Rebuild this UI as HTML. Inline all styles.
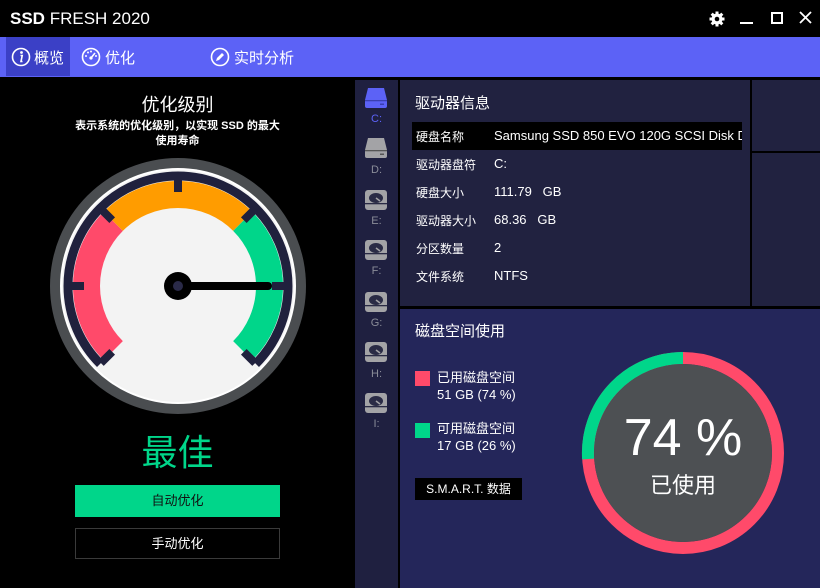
<!DOCTYPE html>
<html><head><meta charset="utf-8"><style>
*{margin:0;padding:0;box-sizing:border-box}
body{width:820px;height:588px;background:#000;position:relative;overflow:hidden;font-family:"Liberation Sans","Noto Sans CJK SC",sans-serif;color:#fff}
.a{position:absolute}
.t{white-space:nowrap}
.drv{position:absolute;left:355px;width:43px;text-align:center;font-size:11px;color:#8a8c98}
.row{position:absolute;left:416px;font-size:12px;white-space:nowrap}
.row span{position:absolute;left:78px;font-size:13px}
</style></head><body>
<!-- title bar -->
<div class="a t" style="left:10px;top:9px;font-size:17px;"><b>SSD</b> FRESH 2020</div>
<svg class="a" style="left:708px;top:10px" width="18" height="18" viewBox="0 0 18 18"><g fill="#fff"><circle cx="9" cy="9" r="5.5"/><rect x="7.5" y="1.5" width="3" height="15"/><rect x="1.5" y="7.5" width="15" height="3"/><rect x="7.5" y="1.5" width="3" height="15" transform="rotate(45 9 9)"/><rect x="7.5" y="1.5" width="3" height="15" transform="rotate(-45 9 9)"/></g><circle cx="9" cy="9" r="2.3" fill="#000"/></svg>
<div class="a" style="left:740px;top:22px;width:13px;height:2px;background:#fff"></div>
<div class="a" style="left:771px;top:12px;width:12px;height:12px;border:2px solid #fff"></div>
<svg class="a" style="left:799px;top:11px" width="13" height="13"><path d="M1 1L12 12M12 1L1 12" stroke="#fff" stroke-width="1.8"/></svg>
<!-- nav -->
<div class="a" style="left:0;top:37px;width:820px;height:40px;background:#5c62f6"></div>
<div class="a" style="left:6px;top:37px;width:64px;height:39px;background:#3b40c6"></div>
<svg class="a" style="left:11px;top:47px" width="20" height="20"><circle cx="10" cy="10" r="8.5" fill="none" stroke="#fff" stroke-width="1.6"/><circle cx="10.5" cy="5.5" r="1.4" fill="#fff"/><path d="M9.5 8.5h1.7l-1.2 6h1.5" stroke="#fff" stroke-width="1.6" fill="none"/></svg>
<div class="a t" style="left:34px;top:47px;font-size:15px">概览</div>
<svg class="a" style="left:81px;top:47px" width="20" height="20"><circle cx="10" cy="10" r="8.5" fill="none" stroke="#fff" stroke-width="1.6"/><path d="M10 11L14 6" stroke="#fff" stroke-width="1.6"/><circle cx="10" cy="11" r="1.6" fill="#fff"/><g fill="#fff"><circle cx="5" cy="9" r="1"/><circle cx="7" cy="5.5" r="1"/><circle cx="10" cy="4.5" r="1"/><circle cx="15" cy="9" r="1"/></g></svg>
<div class="a t" style="left:105px;top:47px;font-size:15px">优化</div>
<svg class="a" style="left:210px;top:47px" width="20" height="20"><circle cx="10" cy="10" r="8.5" fill="none" stroke="#fff" stroke-width="1.6"/><path d="M6 14l1-3 5-5 2 2-5 5z" fill="#fff"/></svg>
<div class="a t" style="left:234px;top:47px;font-size:15px">实时分析</div>
<!-- left panel -->
<div class="a t" style="left:0;width:355px;top:91px;text-align:center;font-size:18px">优化级别</div>
<div class="a" style="left:0;width:355px;top:119px;text-align:center;font-size:11px;font-weight:bold;line-height:15px">表示系统的优化级别，以实现 SSD 的最大<br>使用寿命</div>
<svg class="a" style="left:0;top:0" width="355" height="588">
<circle cx="178" cy="286" r="128" fill="#4a4d50"/>
<circle cx="178" cy="286" r="118" fill="#fff"/>
<circle cx="178" cy="286" r="116" fill="#f3f3f3"/>
<g fill="none" stroke-width="27">
<path d="M113.3 350.7A91.5 91.5 0 0 1 113.3 221.3" stroke="#ff4a6a"/>
<path d="M113.3 221.3A91.5 91.5 0 0 1 242.7 221.3" stroke="#ff9c00"/>
<path d="M242.7 221.3A91.5 91.5 0 0 1 242.7 350.7" stroke="#00d68a"/>
</g>
<path d="M100.2 363.8A110 110 0 1 1 255.8 363.8" fill="none" stroke="#20213d" stroke-width="9"/>
<g stroke="#20213d" stroke-width="8">
<path d="M178 176v16M68 286h16M288 286h-16M100.9 208.9l11.3 11.3M255.1 208.9l-11.3 11.3M100.9 363.1l11.3-11.3M255.1 363.1l-11.3-11.3"/>
</g>
<path d="M178 286H268" stroke="#000" stroke-width="8" stroke-linecap="round"/>
<circle cx="178" cy="286" r="14" fill="#000"/>
<circle cx="178" cy="286" r="5" fill="#2a2a48"/>
</svg>
<div class="a t" style="left:0;width:355px;top:424px;text-align:center;font-size:36px;color:#00d68a">最佳</div>
<div class="a" style="left:75px;top:485px;width:205px;height:32px;background:#00d68a;color:#111;font-size:13px;text-align:center;line-height:32px">自动优化</div>
<div class="a" style="left:75px;top:528px;width:205px;height:31px;border:1px solid #3a3a3a;font-size:13px;text-align:center;line-height:29px">手动优化</div>
<!-- drive sidebar -->
<div class="a" style="left:355px;top:80px;width:43px;height:508px;background:#1f2040"></div>
<svg class="a" style="left:355px;top:80px" width="43" height="360">
<defs>
<g id="ssd"><path d="M3 0h16l3 12v6a2 2 0 0 1-2 2H2a2 2 0 0 1-2-2v-6z"/></g>
<g id="hdd"><rect x="0" y="0" width="22" height="20" rx="3" fill="#a3a3a6"/><ellipse cx="11" cy="8" rx="7" ry="5" fill="#2a2b45"/><path d="M11 8l4 3" stroke="#a3a3a6" stroke-width="1.5"/><rect x="0" y="13" width="22" height="1.3" fill="#2a2b45"/></g>
</defs>
<g transform="translate(10,8)" fill="#5c62f6"><use href="#ssd"/><rect x="0" y="12" width="22" height="1.3" fill="#3a3fb0"/><rect x="15" y="15.5" width="4" height="1.5" fill="#3a3fb0"/></g>
<g transform="translate(10,58)" fill="#a3a3a6"><use href="#ssd"/><rect x="0" y="12" width="22" height="1.3" fill="#555"/><rect x="15" y="15.5" width="4" height="1.5" fill="#555"/></g>
<use href="#hdd" transform="translate(10,110)"/>
<use href="#hdd" transform="translate(10,160)"/>
<use href="#hdd" transform="translate(10,212)"/>
<use href="#hdd" transform="translate(10,262)"/>
<use href="#hdd" transform="translate(10,313)"/>
</svg>
<div class="drv" style="top:113px;color:#5c62f6">C:</div>
<div class="drv" style="top:164px">D:</div>
<div class="drv" style="top:215px">E:</div>
<div class="drv" style="top:265px">F:</div>
<div class="drv" style="top:317px">G:</div>
<div class="drv" style="top:368px">H:</div>
<div class="drv" style="top:418px">I:</div>
<!-- info panel -->
<div class="a" style="left:400px;top:80px;width:350px;height:226px;background:#212240"></div>
<div class="a" style="left:752px;top:80px;width:68px;height:71px;background:#212240"></div>
<div class="a" style="left:752px;top:153px;width:68px;height:153px;background:#212240"></div>
<div class="a t" style="left:415px;top:92px;font-size:15px">驱动器信息</div>
<div class="a" style="left:412px;top:122px;width:330px;height:28px;background:#000"></div>
<div class="a" style="left:412px;top:122px;width:330px;height:28px;overflow:hidden"><div class="row" style="left:4px;top:6px">硬盘名称<span>Samsung SSD 850 EVO 120G SCSI Disk Device</span></div></div>
<div class="row" style="top:156px">驱动器盘符<span>C:</span></div>
<div class="row" style="top:184px">硬盘大小<span>111.79 &nbsp;&nbsp;GB</span></div>
<div class="row" style="top:212px">驱动器大小<span>68.36 &nbsp;&nbsp;GB</span></div>
<div class="row" style="top:240px">分区数量<span>2</span></div>
<div class="row" style="top:268px">文件系统<span>NTFS</span></div>
<!-- disk usage -->
<div class="a" style="left:400px;top:309px;width:420px;height:279px;background:#24265a"></div>
<div class="a t" style="left:415px;top:320px;font-size:15px">磁盘空间使用</div>
<div class="a" style="left:415px;top:371px;width:15px;height:15px;background:#ff4a6a"></div>
<div class="a" style="left:437px;top:369px;font-size:13px;line-height:17px">已用磁盘空间<br>51 GB (74 %)</div>
<div class="a" style="left:415px;top:423px;width:15px;height:15px;background:#00d68a"></div>
<div class="a" style="left:437px;top:420px;font-size:13px;line-height:17px">可用磁盘空间<br>17 GB (26 %)</div>
<div class="a t" style="left:415px;top:478px;width:107px;height:22px;background:#000;font-size:12px;text-align:center;line-height:22px">S.M.A.R.T. 数据</div>
<svg class="a" style="left:577px;top:347px" width="212" height="212">
<circle cx="106" cy="106" r="95" fill="none" stroke="#ff4a6a" stroke-width="12"/>
<path d="M106 11A95 95 0 0 0 11.1 112" fill="none" stroke="#00d68a" stroke-width="12"/>
<circle cx="106" cy="106" r="89" fill="#4d5053"/>
</svg>
<div class="a t" style="left:583px;width:200px;top:408px;text-align:center;font-size:52px;line-height:60px">74 %</div>
<div class="a t" style="left:583px;width:200px;top:468px;text-align:center;font-size:22px">已使用</div>
</body></html>
